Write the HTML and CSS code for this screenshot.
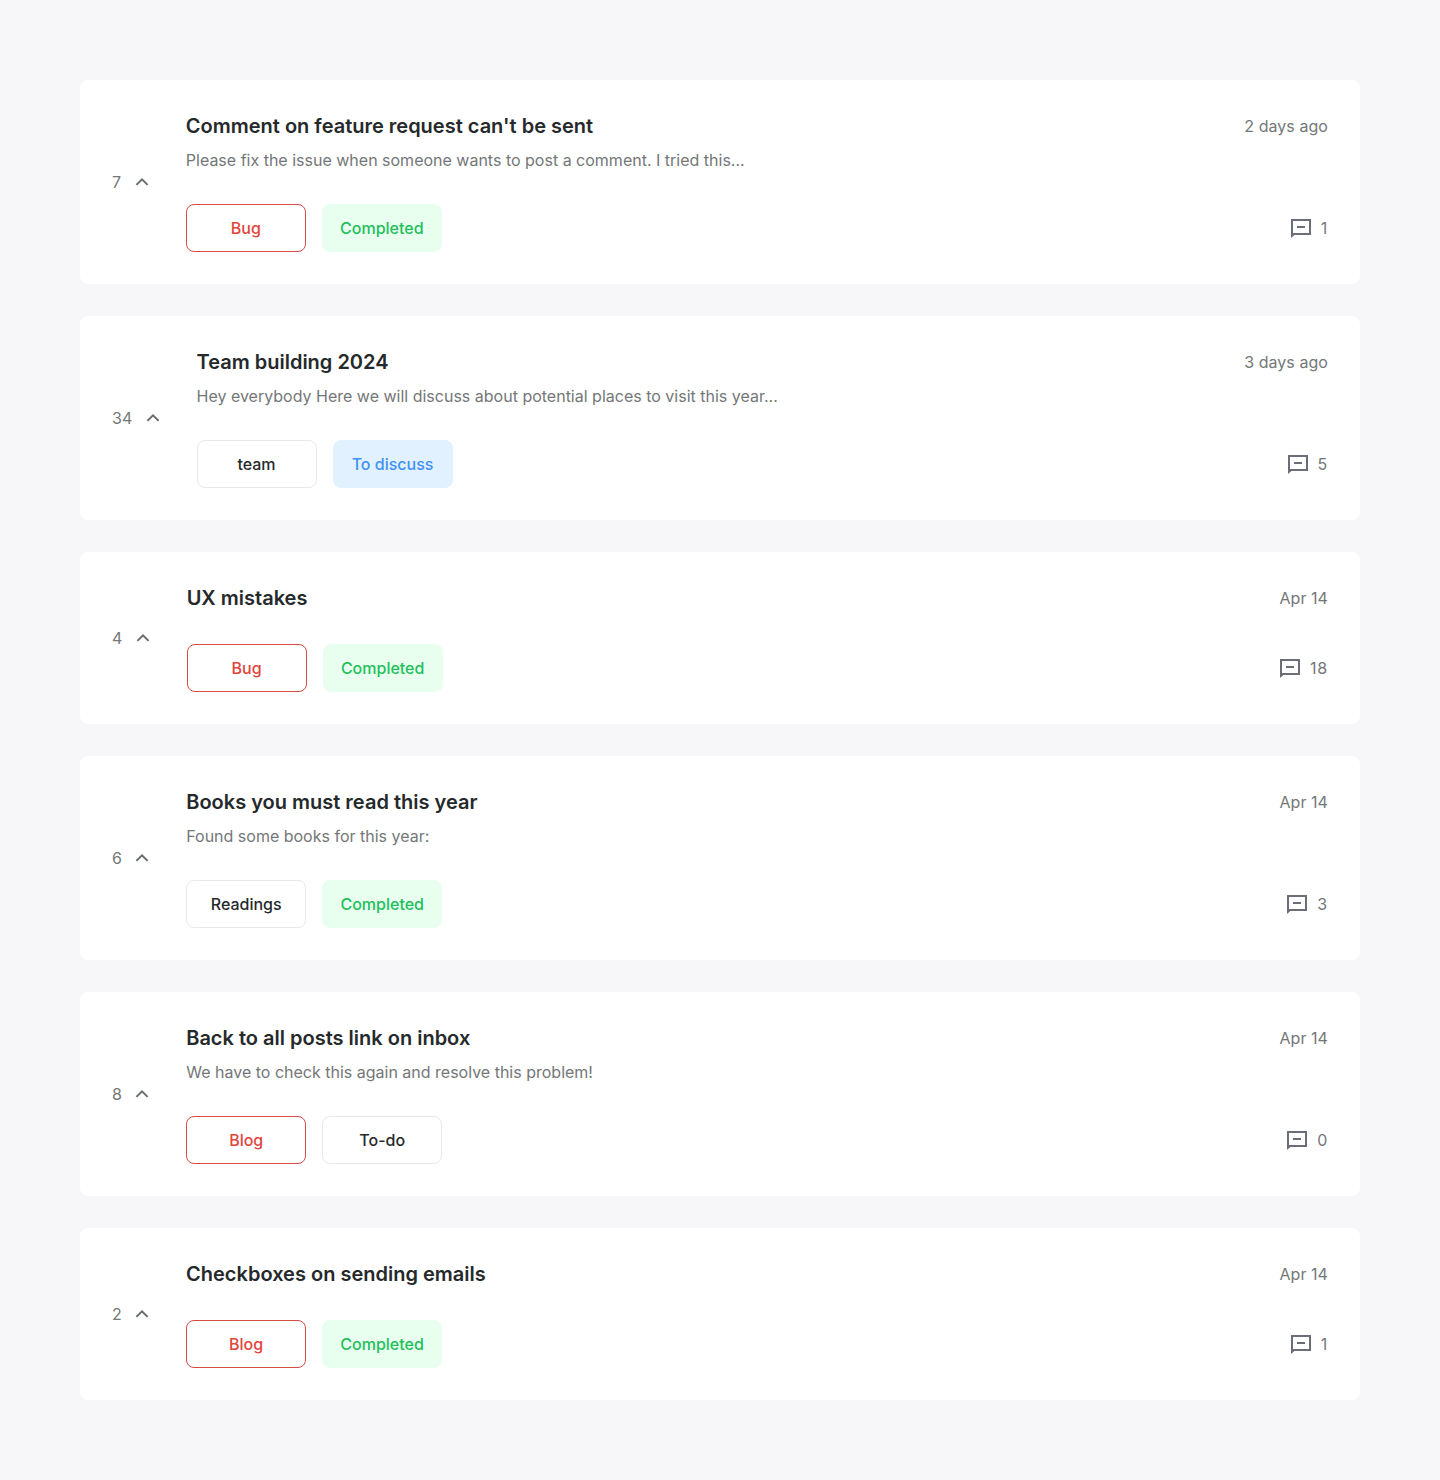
FILE: index.html
```html
<!DOCTYPE html>
<html lang="en">
<head>
<meta charset="utf-8">
<title>Posts</title>
<link rel="stylesheet" href="styles.css">
</head>
<body>
<svg class="sprite" width="0" height="0" aria-hidden="true">
  <symbol id="chevron" viewBox="0 0 24 24"><path d="M6.4 14.9 12 9.4l5.6 5.5" fill="none" stroke="currentColor" stroke-width="2"/></symbol>
  <symbol id="comment" viewBox="0 0 24 24"><path fill-rule="evenodd" d="M2 3h20v16H5.4L2 22zM4 5v12h16V5zM8 10h8v2H8z" fill="currentColor"/></symbol>
</svg>
<main class="posts">
  <article class="post">
    <div class="vote"><span class="votes">7</span><svg class="icon"><use href="#chevron"/></svg></div>
    <div class="content">
      <h2 class="title">Comment on feature request can't be sent</h2>
      <p class="excerpt">Please fix the issue when someone wants to post a comment. I tried this...</p>
      <div class="tags"><span class="tag tag-red">Bug</span><span class="tag tag-green">Completed</span></div>
    </div>
    <div class="meta"><time class="date">2 days ago</time><div class="comments"><svg class="icon icon-comment"><use href="#comment"/></svg><span>1</span></div></div>
  </article>
  <article class="post">
    <div class="vote"><span class="votes">34</span><svg class="icon"><use href="#chevron"/></svg></div>
    <div class="content">
      <h2 class="title">Team building 2024</h2>
      <p class="excerpt">Hey everybody Here we will discuss about potential places to visit this year...</p>
      <div class="tags"><span class="tag">team</span><span class="tag tag-blue">To discuss</span></div>
    </div>
    <div class="meta"><time class="date">3 days ago</time><div class="comments"><svg class="icon icon-comment"><use href="#comment"/></svg><span>5</span></div></div>
  </article>
  <article class="post">
    <div class="vote"><span class="votes">4</span><svg class="icon"><use href="#chevron"/></svg></div>
    <div class="content">
      <h2 class="title">UX mistakes</h2>
      <div class="tags"><span class="tag tag-red">Bug</span><span class="tag tag-green">Completed</span></div>
    </div>
    <div class="meta"><time class="date">Apr 14</time><div class="comments"><svg class="icon icon-comment"><use href="#comment"/></svg><span>18</span></div></div>
  </article>
  <article class="post">
    <div class="vote"><span class="votes">6</span><svg class="icon"><use href="#chevron"/></svg></div>
    <div class="content">
      <h2 class="title">Books you must read this year</h2>
      <p class="excerpt">Found some books for this year:</p>
      <div class="tags"><span class="tag">Readings</span><span class="tag tag-green">Completed</span></div>
    </div>
    <div class="meta"><time class="date">Apr 14</time><div class="comments"><svg class="icon icon-comment"><use href="#comment"/></svg><span>3</span></div></div>
  </article>
  <article class="post">
    <div class="vote"><span class="votes">8</span><svg class="icon"><use href="#chevron"/></svg></div>
    <div class="content">
      <h2 class="title">Back to all posts link on inbox</h2>
      <p class="excerpt">We have to check this again and resolve this problem!</p>
      <div class="tags"><span class="tag tag-red">Blog</span><span class="tag">To-do</span></div>
    </div>
    <div class="meta"><time class="date">Apr 14</time><div class="comments"><svg class="icon icon-comment"><use href="#comment"/></svg><span>0</span></div></div>
  </article>
  <article class="post">
    <div class="vote"><span class="votes">2</span><svg class="icon"><use href="#chevron"/></svg></div>
    <div class="content">
      <h2 class="title">Checkboxes on sending emails</h2>
      <div class="tags"><span class="tag tag-red">Blog</span><span class="tag tag-green">Completed</span></div>
    </div>
    <div class="meta"><time class="date">Apr 14</time><div class="comments"><svg class="icon icon-comment"><use href="#comment"/></svg><span>1</span></div></div>
  </article>
</main>
</body>
</html>
```
FILE: styles.css
```css
* { box-sizing: border-box; }

body {
  margin: 0;
  background: #f7f7f9;
  color: #747778;
  font: 400 16px/24px Inter, "Liberation Sans", sans-serif;
}

.sprite { display: none; }

.posts {
  display: flex;
  flex-direction: column;
  gap: 32px;
  padding: 80px;
}

.post {
  display: flex;
  gap: 32px;
  padding: 32px;
  background: #fff;
  border-radius: 8px;
}

.vote,
.comments {
  display: flex;
  align-items: center;
  gap: 8.3px;
}

.votes { min-width: 9.5px; }

.icon {
  display: block;
  width: 24px;
  height: 24px;
  color: #696c6e;
}

.icon-comment { color: #6b6e78; }

.content { flex: 1; }

.title {
  margin: 0;
  color: #25292b;
  font-size: 20px;
  font-weight: 600;
  line-height: 28px;
}

.excerpt { margin: 8px 0 0; }

.tags {
  display: flex;
  gap: 16px;
  margin-top: 32px;
}

.tag {
  display: flex;
  align-items: center;
  justify-content: center;
  width: 120px;
  height: 48px;
  border: 1px solid #e6e8ea;
  border-radius: 8px;
  color: #25292b;
  font-weight: 500;
}

.tag-red { border-color: #d94a43; color: #e2453c; }
.tag-green { border-color: #e8fff0; background: #e8fff0; color: #22bf5b; }
.tag-blue { border-color: #e1f1ff; background: #e1f1ff; color: #4090f7; }

.meta {
  display: flex;
  flex-direction: column;
  align-items: flex-end;
  justify-content: space-between;
}

.date {
  line-height: 28px;
  letter-spacing: 0.06px;
}

.comments {
  gap: 8px;
  height: 48px;
  letter-spacing: 0.75px;
}
```
